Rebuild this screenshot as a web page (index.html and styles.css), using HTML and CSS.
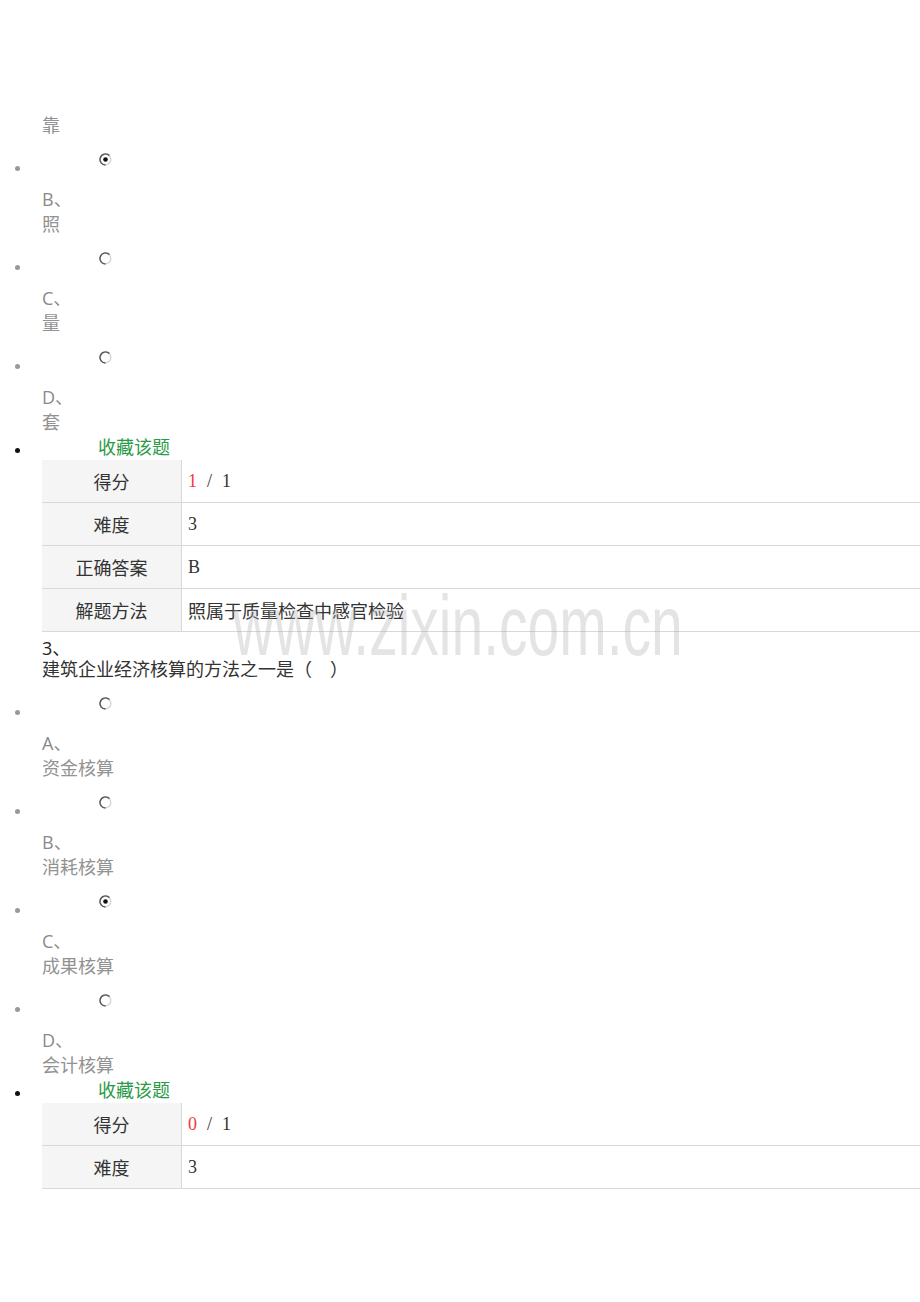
FILE: index.html
```html
<!DOCTYPE html>
<html lang="zh-CN">
<head>
<meta charset="utf-8">
<title>试题</title>
<link rel="stylesheet" href="styles.css">
</head>
<body>
<div class="page">
  <div class="opt-text lead">靠</div>

  <div class="opts">
    <div class="opt">
      <div class="opt-head"><span class="dot"></span>
        <svg class="radio" viewBox="0 0 13 13"><circle cx="6.5" cy="6.5" r="5.3" fill="#fff" stroke="#d6d6d6" stroke-width="1.4"/><path d="M6.5 12 A5.5 5.5 0 0 1 1.2 5 A5.5 5.5 0 0 1 10.5 2.6" fill="none" stroke="#555" stroke-width="1.4"/><circle cx="6.5" cy="6.5" r="2.3" fill="#111"/></svg>
      </div>
      <div class="opt-label">B、</div>
      <div class="opt-text">照</div>
    </div>
    <div class="opt">
      <div class="opt-head"><span class="dot"></span>
        <svg class="radio" viewBox="0 0 13 13"><circle cx="6.5" cy="6.5" r="5.3" fill="#fff" stroke="#d6d6d6" stroke-width="1.4"/><path d="M6.5 12 A5.5 5.5 0 0 1 1.2 5 A5.5 5.5 0 0 1 10.5 2.6" fill="none" stroke="#555" stroke-width="1.4"/></svg>
      </div>
      <div class="opt-label">C、</div>
      <div class="opt-text">量</div>
    </div>
    <div class="opt">
      <div class="opt-head"><span class="dot"></span>
        <svg class="radio" viewBox="0 0 13 13"><circle cx="6.5" cy="6.5" r="5.3" fill="#fff" stroke="#d6d6d6" stroke-width="1.4"/><path d="M6.5 12 A5.5 5.5 0 0 1 1.2 5 A5.5 5.5 0 0 1 10.5 2.6" fill="none" stroke="#555" stroke-width="1.4"/></svg>
      </div>
      <div class="opt-label">D、</div>
      <div class="opt-text">套</div>
    </div>
  </div>

  <div class="fav"><span class="dot dark"></span><span class="fav-text">收藏该题</span></div>
  <table class="info">
    <tr><td class="k">得分</td><td class="v"><span class="score">1</span><span class="sep">/</span>1</td></tr>
    <tr><td class="k">难度</td><td class="v">3</td></tr>
    <tr><td class="k">正确答案</td><td class="v">B</td></tr>
    <tr><td class="k">解题方法</td><td class="v">照属于质量检查中感官检验</td></tr>
  </table>

  <div class="q-num">3、</div>
  <div class="q-text">建筑企业经济核算的方法之一是（<span class="blank"> </span>）</div>

  <div class="opts">
    <div class="opt">
      <div class="opt-head"><span class="dot"></span>
        <svg class="radio" viewBox="0 0 13 13"><circle cx="6.5" cy="6.5" r="5.3" fill="#fff" stroke="#d6d6d6" stroke-width="1.4"/><path d="M6.5 12 A5.5 5.5 0 0 1 1.2 5 A5.5 5.5 0 0 1 10.5 2.6" fill="none" stroke="#555" stroke-width="1.4"/></svg>
      </div>
      <div class="opt-label">A、</div>
      <div class="opt-text">资金核算</div>
    </div>
    <div class="opt">
      <div class="opt-head"><span class="dot"></span>
        <svg class="radio" viewBox="0 0 13 13"><circle cx="6.5" cy="6.5" r="5.3" fill="#fff" stroke="#d6d6d6" stroke-width="1.4"/><path d="M6.5 12 A5.5 5.5 0 0 1 1.2 5 A5.5 5.5 0 0 1 10.5 2.6" fill="none" stroke="#555" stroke-width="1.4"/></svg>
      </div>
      <div class="opt-label">B、</div>
      <div class="opt-text">消耗核算</div>
    </div>
    <div class="opt">
      <div class="opt-head"><span class="dot"></span>
        <svg class="radio" viewBox="0 0 13 13"><circle cx="6.5" cy="6.5" r="5.3" fill="#fff" stroke="#d6d6d6" stroke-width="1.4"/><path d="M6.5 12 A5.5 5.5 0 0 1 1.2 5 A5.5 5.5 0 0 1 10.5 2.6" fill="none" stroke="#555" stroke-width="1.4"/><circle cx="6.5" cy="6.5" r="2.3" fill="#111"/></svg>
      </div>
      <div class="opt-label">C、</div>
      <div class="opt-text">成果核算</div>
    </div>
    <div class="opt">
      <div class="opt-head"><span class="dot"></span>
        <svg class="radio" viewBox="0 0 13 13"><circle cx="6.5" cy="6.5" r="5.3" fill="#fff" stroke="#d6d6d6" stroke-width="1.4"/><path d="M6.5 12 A5.5 5.5 0 0 1 1.2 5 A5.5 5.5 0 0 1 10.5 2.6" fill="none" stroke="#555" stroke-width="1.4"/></svg>
      </div>
      <div class="opt-label">D、</div>
      <div class="opt-text">会计核算</div>
    </div>
  </div>

  <div class="fav"><span class="dot dark"></span><span class="fav-text">收藏该题</span></div>
  <table class="info">
    <tr><td class="k">得分</td><td class="v"><span class="score">0</span><span class="sep">/</span>1</td></tr>
    <tr><td class="k">难度</td><td class="v">3</td></tr>
  </table>

  <div class="watermark">www.zixin.com.cn</div>
</div>
</body>
</html>
```
FILE: styles.css
```css
html, body {
  margin: 0;
  padding: 0;
  background: #fff;
  overflow-x: hidden;
}
body {
  font-family: "Open Sans", "Noto Sans CJK SC", sans-serif;
  font-size: 18px;
}
.page {
  position: relative;
  padding-top: 112.5px;
  min-height: 1190px;
}
.lead {
  margin-bottom: 15.5px;
}
.opt + .opt {
  margin-top: 15.5px;
}
.opt-head {
  display: flex;
  align-items: flex-start;
  height: 33.5px;
}
.dot {
  display: block;
  width: 5px;
  height: 5px;
  border-radius: 50%;
  background: #999;
  margin-left: 14.5px;
  margin-top: 12.5px;
  flex: none;
}
.dot.dark {
  background: #111;
  margin-top: 13px;
}
.radio {
  display: block;
  width: 13px;
  height: 13px;
  margin-left: 79.5px;
  flex: none;
}
.opt-label,
.opt-text {
  padding-left: 42px;
  line-height: 25px;
  color: #8a8a8a;
}
.opt-text {
  color: #929292;
}
.fav {
  display: flex;
  align-items: flex-start;
  height: 25.5px;
}
.fav-text {
  margin-left: 78.5px;
  line-height: 25.5px;
  color: #2a9a45;
}
.info {
  margin-left: 42px;
  width: 900px;
  border-collapse: collapse;
  font-family: "Liberation Serif", "Noto Sans CJK SC", serif;
  font-size: 18px;
  color: #333;
}
.info td {
  height: 42px;
  padding: 0;
  border-bottom: 1px solid #d8d8d8;
  vertical-align: middle;
}
.info td.k {
  width: 139px;
  background: #f5f5f5;
  text-align: center;
  border-right: 1px solid #d8d8d8;
}
.info td.v {
  padding-left: 6px;
  text-align: left;
}
.score {
  color: #f03a3a;
}
.sep {
  margin: 0 10px;
}
.q-num {
  margin-top: 6px;
  padding-left: 42px;
  line-height: 20px;
  color: #222;
}
.q-text {
  padding-left: 42px;
  line-height: 20px;
  color: #333;
  margin-bottom: 19px;
  font-family: "Noto Sans CJK SC", sans-serif;
}
.blank {
  display: inline-block;
  width: 18px;
}
.watermark {
  position: absolute;
  left: 233px;
  top: 606.7px;
  font-family: "Liberation Sans", Arial, sans-serif;
  font-size: 57px;
  line-height: 1;
  color: rgba(170, 170, 170, 0.32);
  transform: scaleY(1.5);
  transform-origin: 0 48.3px;
  white-space: nowrap;
  pointer-events: none;
}
```
